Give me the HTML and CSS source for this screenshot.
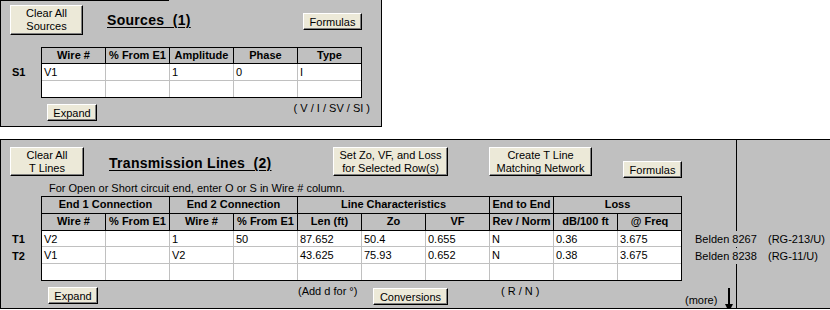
FILE: index.html
```html
<!DOCTYPE html>
<html lang="en">

<head>
    <meta charset="UTF-8">
    <title>Sources and Transmission Lines</title>
    <link rel="stylesheet" href="styles.css">
</head>

<body>

    <section class="panel sources">
        <div class="edge"></div>
        <div class="bar">
            <button class="btn clear">Clear All<br>Sources</button>
            <h2 class="title src-title">Sources&nbsp;&nbsp;(1)</h2>
            <button class="btn small src-formulas">Formulas</button>
        </div>

        <div class="table-row src-row">
            <div class="labels">
                <div class="lab">S1</div>
                <div class="lab"></div>
            </div>
            <div class="grid src-grid">
                <div class="h">Wire #</div>
                <div class="h">% From E1</div>
                <div class="h">Amplitude</div>
                <div class="h">Phase</div>
                <div class="h end">Type</div>

                <div class="c">V1</div>
                <div class="c"></div>
                <div class="c">1</div>
                <div class="c">0</div>
                <div class="c end">I</div>

                <div class="c last"></div>
                <div class="c last"></div>
                <div class="c last"></div>
                <div class="c last"></div>
                <div class="c last end"></div>
            </div>
        </div>

        <div class="foot">
            <button class="btn small src-expand">Expand</button>
            <span class="hint src-types">( V / I / SV / SI )</span>
        </div>
    </section>

    <section class="panel tlines">
        <div class="main">
            <div class="bar tl-bar">
                <button class="btn clear tl-clear">Clear All<br>T Lines</button>
                <h2 class="title tl-title">Transmission Lines&nbsp;&nbsp;(2)</h2>
                <button class="btn set-zo">Set Zo, VF, and Loss<br>for Selected Row(s)</button>
                <button class="btn create">Create T Line<br>Matching Network</button>
                <button class="btn small tl-formulas">Formulas</button>
            </div>

            <p class="note">For Open or Short circuit end, enter O or S in Wire # column.</p>

            <div class="table-row">
                <div class="labels tl-labels">
                    <div class="lab">T1</div>
                    <div class="lab">T2</div>
                </div>
                <div class="grid tl-grid">
                    <div class="h span2">End 1 Connection</div>
                    <div class="h span2">End 2 Connection</div>
                    <div class="h span3">Line Characteristics</div>
                    <div class="h">End to End</div>
                    <div class="h span2 end">Loss</div>

                    <div class="h">Wire #</div>
                    <div class="h">% From E1</div>
                    <div class="h">Wire #</div>
                    <div class="h">% From E1</div>
                    <div class="h">Len (ft)</div>
                    <div class="h">Zo</div>
                    <div class="h">VF</div>
                    <div class="h">Rev / Norm</div>
                    <div class="h">dB/100 ft</div>
                    <div class="h end">@ Freq</div>

                    <div class="c">V2</div>
                    <div class="c"></div>
                    <div class="c">1</div>
                    <div class="c">50</div>
                    <div class="c">87.652</div>
                    <div class="c">50.4</div>
                    <div class="c">0.655</div>
                    <div class="c">N</div>
                    <div class="c">0.36</div>
                    <div class="c end">3.675</div>

                    <div class="c">V1</div>
                    <div class="c"></div>
                    <div class="c">V2</div>
                    <div class="c"></div>
                    <div class="c">43.625</div>
                    <div class="c">75.93</div>
                    <div class="c">0.652</div>
                    <div class="c">N</div>
                    <div class="c">0.38</div>
                    <div class="c end">3.675</div>

                    <div class="c last"></div>
                    <div class="c last"></div>
                    <div class="c last"></div>
                    <div class="c last"></div>
                    <div class="c last"></div>
                    <div class="c last"></div>
                    <div class="c last"></div>
                    <div class="c last"></div>
                    <div class="c last"></div>
                    <div class="c last end"></div>
                </div>
                <div class="cables">
                    <div class="cable"><span class="cable-name">Belden 8267</span><span>(RG-213/U)</span></div>
                    <div class="cable"><span class="cable-name">Belden 8238</span><span>(RG-11/U)</span></div>
                </div>
            </div>

            <div class="foot tl-foot">
                <button class="btn small tl-expand">Expand</button>
                <span class="hint add-d">(Add d for &deg;)</span>
                <button class="btn small conversions">Conversions</button>
                <span class="hint rn">( R / N )</span>
                <span class="hint more">(more)</span>
                <svg class="arrow" width="9" height="24" viewBox="0 0 9 24">
                    <rect x="3" y="0" width="2" height="17" fill="#000"/>
                    <polygon points="0,16 8,16 4,24" fill="#000"/>
                </svg>
            </div>
        </div>
        <div class="side"></div>
    </section>

</body>

</html>
```

FILE: styles.css
```css
* {
    box-sizing: border-box;
}

body {
    margin: 0;
    font-family: "Liberation Sans", Arial, sans-serif;
    font-size: 11px;
    color: #000;
    background: #fff;
    overflow: hidden;
}

.panel {
    background: #c0c0c0;
}

/* ---------- buttons ---------- */

.btn {
    font: 11px/13px "Liberation Sans", Arial, sans-serif;
    color: #000;
    background: #ece9d8;
    border: 1px solid;
    border-color: #fff #000 #000 #fff;
    box-shadow: inset -1px -1px #808080;
    padding: 0;
    flex: none;
}

.btn.small {
    height: 17px;
    line-height: 14px;
}

.clear {
    width: 73px;
    height: 30px;
}

/* ---------- titles ---------- */

.title {
    margin: 8px 0 0;
    font: bold 14px/16px "Liberation Sans", Arial, sans-serif;
    letter-spacing: 0.3px;
    text-decoration: underline;
    text-decoration-thickness: 1px;
    text-underline-offset: 2px;
    white-space: nowrap;
    flex: none;
}

.bar {
    display: flex;
    align-items: flex-start;
    padding-left: 9px;
}

/* ---------- sheet grids ---------- */

.table-row {
    display: flex;
    align-items: flex-start;
}

.labels {
    width: 40px;
    flex: none;
    padding-left: 11px;
    font-weight: bold;
    display: flex;
    flex-direction: column;
}

.lab {
    height: 17px;
    line-height: 16px;
}

.grid {
    display: grid;
    flex: none;
    border: 1px solid #000;
    background: #fff;
}

.h {
    background: #c0c0c0;
    border-right: 1px solid #000;
    border-bottom: 1px solid #000;
    font-weight: bold;
    text-align: center;
    line-height: 15px;
    white-space: nowrap;
    overflow: hidden;
}

.c {
    border-right: 1px solid #c0c0c0;
    border-bottom: 1px solid #c0c0c0;
    padding-left: 2px;
    line-height: 16px;
    white-space: nowrap;
    overflow: hidden;
}

.end {
    border-right: none;
}

.last {
    border-bottom: none;
}

.span2 {
    grid-column: span 2;
}

.span3 {
    grid-column: span 3;
}

.hint {
    line-height: 13px;
    white-space: nowrap;
    flex: none;
}

.foot {
    display: flex;
    align-items: flex-start;
}

/* ---------- sources panel ---------- */

.sources {
    width: 382px;
    height: 127px;
    border: 1px solid #000;
    border-top: none;
}

.edge {
    width: 168px;
    height: 1px;
    background: #000;
}

.sources .bar {
    margin-top: 4px;
}

.src-title {
    margin-left: 24px;
    margin-top: 7px;
}

.src-formulas {
    width: 59px;
    height: 16px;
    margin: 8px 19px 0 auto;
}

.src-row {
    margin-top: 12px;
}

.src-row .labels {
    padding-top: 17px;
}

.src-grid {
    grid-template-columns: repeat(4, 64px) 63px;
    grid-template-rows: 16px 17px 16px;
}

.sources .foot {
    margin-top: 6px;
}

.src-expand {
    width: 50px;
    margin-left: 46px;
}

.src-types {
    margin: -2px 11px 0 auto;
}

/* ---------- transmission lines panel ---------- */

.tlines {
    margin-top: 12px;
    height: 170px;
    border-top: 1px solid #000;
    border-bottom: 1px solid #000;
    border-left: 1px solid #000;
    display: flex;
}

.main {
    width: 736px;
    flex: none;
    border-right: 1px solid #000;
}

.side {
    flex: 1;
}

.tl-bar {
    padding-top: 7px;
}

.tl-clear {
    width: 74px;
    height: 29px;
}

.tl-title {
    width: 224px;
    margin-left: 25px;
}

.set-zo {
    width: 115px;
    height: 29px;
}

.create {
    width: 103px;
    height: 29px;
    margin-left: 41px;
}

.tl-formulas {
    width: 59px;
    height: 16px;
    margin: 14px 0 0 31px;
}

.note {
    margin: 4px 0 1px 48px;
    line-height: 13px;
}

.tl-labels {
    padding-top: 35px;
}

.tl-grid {
    grid-template-columns: repeat(9, 64px) 63px;
    grid-template-rows: 17px 17px 16px 17px 16px;
}

.cables {
    flex: none;
    padding-top: 35px;
    margin-left: 13px;
    display: flex;
    flex-direction: column;
}

.cable {
    width: 130px;
    height: 16px;
    margin-bottom: 1px;
    line-height: 16px;
    background: #c0c0c0;
    white-space: nowrap;
    display: flex;
}

.cable-name {
    width: 73px;
}

.tl-foot {
    margin-top: 4px;
}

.tl-expand {
    width: 50px;
    margin: 2px 0 0 47px;
}

.add-d {
    width: 75px;
    margin-left: 200px;
}

.conversions {
    width: 75px;
    margin-top: 3px;
}

.rn {
    width: 184px;
    margin-left: 53px;
}

.more {
    width: 40px;
    margin-top: 9px;
}

.arrow {
    margin-top: 3px;
    flex: none;
    overflow: visible;
}
```
